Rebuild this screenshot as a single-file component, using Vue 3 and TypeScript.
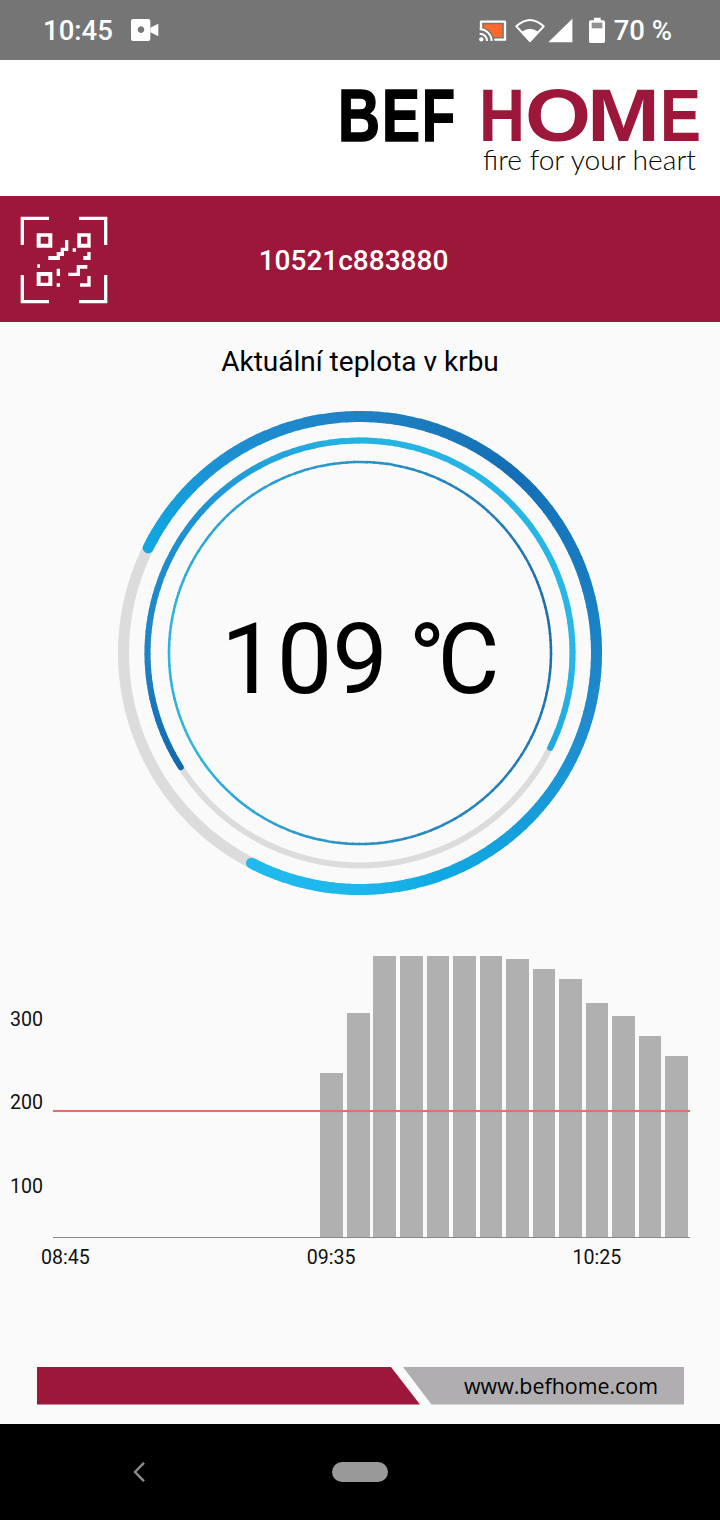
<template>
  <div class="screen">
    <header class="status">
      <div class="status__left">
        <span class="status__text">10:45</span>
        <svg class="status__cam" viewBox="0 0 84 66" width="28" height="22">
          <path fill="#fff" fill-rule="evenodd" d="M6 0H52Q58 0 58 6V60Q58 66 52 66H6Q0 66 0 60V6Q0 0 6 0ZM30 22a10 10 0 1 0 .01 0Z" />
          <path fill="#fff" d="M58 26L82 14V52L58 40Z" />
        </svg>
      </div>
      <div class="status__right">
        <svg viewBox="60 50 380 80" width="126.7" height="26.7">
          <path d="M66 84V64H138V118H106" fill="none" stroke="#fff" stroke-width="7" stroke-linejoin="round" />
          <path d="M75 72H130V110H102Q98 88 75 82Z" fill="#ff6a2c" />
          <circle cx="67" cy="117" r="6.5" fill="#fff" />
          <path d="M62 100A22 22 0 0 1 84 122M62 86A37 37 0 0 1 98 122" fill="none" stroke="#fff" stroke-width="6" />
          <path d="M213 122L172 78Q213 40 254 78Z" fill="none" stroke="#fff" stroke-width="6" stroke-linejoin="round" />
          <path d="M213 126L186 96Q213 74 240 96Z" fill="#fff" />
          <path d="M268 126L340 55V126Z" fill="#fff" />
          <path d="M405 52H425V60H432Q438 60 438 66V122Q438 128 432 128H396Q390 128 390 122V66Q390 60 396 60H405Z" fill="#fff" />
          <rect x="398" y="67" width="32" height="17" fill="#8f8f8f" />
        </svg>
        <span class="status__text">70 %</span>
      </div>
    </header>

    <div class="brand">
      <svg class="brand__logo" viewBox="330 60 380 136" width="380" height="136">
        <text
          v-for="l in logoLetters"
          :key="l.x"
          :transform="`translate(${l.x} 141) scale(${l.w / (l.adv * 74)} 1)`"
          :class="['brand__letter', l.red ? 'brand__letter--red' : 'brand__letter--black']"
        >{{ l.ch }}</text>
        <text x="483" y="169.5" textLength="213" lengthAdjust="spacingAndGlyphs" class="brand__slogan">fire for your heart</text>
      </svg>
    </div>

    <div class="device">
      <svg class="device__qr" viewBox="0 0 390 378" width="130" height="126" fill="#fff">
        <path d="M62 62H147V72H72V147H62ZM237 62H322V147H312V72H237ZM62 237H72V312H147V322H62ZM312 237H322V322H237V312H312Z" />
        <path fill-rule="evenodd" d="M110 112H157V155H110ZM122 122V143H145V122ZM232 112H272V155H232ZM243 122V143H262V122ZM110 228H157V270H110ZM122 240V260H145V240Z" />
        <path d="M145 180H170V168H182V155H195V132H205V165H192V180H180V192H145ZM218 157H228V167H218ZM262 168H272V192H250V180H262ZM112 205H120V215H112ZM170 218H180V240H170ZM170 262H180V272H170ZM230 207H262V218H240V240H205V230H230ZM262 240H272V272H240V262H262Z" />
      </svg>
      <div class="device__id">10521c883880</div>
    </div>

    <main class="main">
      <h1 class="title">Aktuální teplota v krbu</h1>

      <svg class="gauge" viewBox="0 0 500 500" width="500" height="500">
        <circle cx="250" cy="250" r="236.5" class="gauge__track" stroke-width="11" />
        <circle cx="250" cy="250" r="212.5" class="gauge__track" stroke-width="6" />
        <g v-for="ring in rings" :key="ring.r">
          <path
            v-for="(s, i) in ring.segments"
            :key="i"
            :d="s.d"
            :stroke="s.color"
            :stroke-width="ring.width"
            :stroke-linecap="ring.caps && (i === 0 || i === ring.segments.length - 1) ? 'round' : 'butt'"
            fill="none"
          />
        </g>
        <text x="111" y="290" class="gauge__value">109 <tspan dx="-4">°</tspan><tspan dx="-8" textLength="62" lengthAdjust="spacingAndGlyphs">C</tspan></text>
      </svg>

      <section class="chart">
        <div class="chart__body">
          <div class="chart__axis">
            <span v-for="v in yLabels" :key="v" class="chart__y">{{ v }}</span>
          </div>
          <div class="chart__plot">
            <div
              v-for="(h, i) in bars"
              :key="i"
              class="chart__bar"
              :style="{ height: h + 'px' }"
            />
            <div class="chart__limit" />
          </div>
        </div>
        <div class="chart__times">
          <span v-for="t in times" :key="t" class="chart__time">{{ t }}</span>
        </div>
      </section>

      <footer class="banner">
        <div class="banner__red" />
        <div class="banner__grey">www.befhome.com</div>
      </footer>
    </main>

    <nav class="nav">
      <svg class="nav__back" viewBox="0 0 12 20" width="12" height="20">
        <path d="M11 0.8L2 10L11 19.2" fill="none" stroke="#8c8c8c" stroke-width="2.4" />
      </svg>
      <div class="nav__home" />
    </nav>
  </div>
</template>

<script setup lang="ts">
type Stop = [number, string]

// adv = glyph advance of Liberation Sans Bold, used to squeeze each letter to the logo's width
const logoLetters = [
  { ch: 'B', x: 338, w: 42, adv: 0.722, red: false },
  { ch: 'E', x: 382, w: 38, adv: 0.667, red: false },
  { ch: 'F', x: 422, w: 33, adv: 0.611, red: false },
  { ch: 'H', x: 479, w: 46, adv: 0.722, red: true },
  { ch: 'O', x: 525, w: 66, adv: 0.778, red: true },
  { ch: 'M', x: 587, w: 73, adv: 0.833, red: true },
  { ch: 'E', x: 660, w: 41, adv: 0.667, red: true }
]

const yLabels = [300, 200, 100]
const times = ['08:45', '09:35', '10:25']
const bars = [164.3, 224.3, 281.3, 281.3, 281.3, 281.3, 281.3, 278, 267.7, 257.7, 234.3, 221, 201, 181]

function hexToRgb(hex: string) {
  return [1, 3, 5].map((i) => parseInt(hex.slice(i, i + 2), 16))
}

function colorAt(stops: Stop[], deg: number) {
  let a = stops[0]
  let b = stops[stops.length - 1]
  for (let i = 0; i < stops.length - 1; i++) {
    if (deg >= stops[i][0] && deg <= stops[i + 1][0]) {
      a = stops[i]
      b = stops[i + 1]
      break
    }
  }
  const t = b[0] === a[0] ? 0 : (deg - a[0]) / (b[0] - a[0])
  const ca = hexToRgb(a[1])
  const cb = hexToRgb(b[1])
  const mix = ca.map((c, i) => Math.round(c + (cb[i] - c) * t))
  return `rgb(${mix.join(',')})`
}

function point(r: number, deg: number) {
  const rad = (deg * Math.PI) / 180
  return `${(250 + r * Math.sin(rad)).toFixed(2)} ${(250 - r * Math.cos(rad)).toFixed(2)}`
}

// the sweep gradient is cut into short arcs, svg has no conic stroke
function segments(r: number, from: number, to: number, stops: Stop[]) {
  const out: { d: string; color: string }[] = []
  const step = 2
  for (let a = from; a < to; a += step) {
    const end = Math.min(a + step + 0.4, to)
    out.push({
      d: `M${point(r, a)}A${r} ${r} 0 0 1 ${point(r, end)}`,
      color: colorAt(stops, a + step / 2)
    })
  }
  return out
}

const rings = [
  {
    r: 236.5,
    width: 11,
    caps: true,
    segments: segments(236.5, 296.4, 567.3, [
      [296, '#0fa9e3'],
      [325, '#1c90d2'],
      [360, '#1f82c5'],
      [400, '#146fb5'],
      [440, '#1a80c4'],
      [465, '#1f8bce'],
      [500, '#14a0dc'],
      [520, '#10a8e2'],
      [540, '#1db7ec'],
      [568, '#20baee']
    ])
  },
  {
    r: 212.5,
    width: 6,
    caps: true,
    segments: segments(212.5, 237.5, 476.5, [
      [237, '#1268ae'],
      [270, '#1f84c6'],
      [315, '#1f96d4'],
      [360, '#25b3e4'],
      [450, '#27b8e8'],
      [477, '#22a8de']
    ])
  },
  {
    r: 191,
    width: 2.5,
    caps: false,
    segments: segments(191, 0, 360, [
      [0, '#2a92c8'],
      [80, '#1f6ca8'],
      [180, '#2a90c6'],
      [240, '#30b4de'],
      [280, '#2fb2de'],
      [360, '#2a92c8']
    ])
  }
]
</script>

<style scoped>
.screen {
  width: 720px;
  height: 1520px;
  display: flex;
  flex-direction: column;
  background: #fafafa;
  font-family: Roboto, sans-serif;
  overflow: hidden;
}

.status {
  height: 60px;
  flex: none;
  box-sizing: border-box;
  background: #757575;
  display: flex;
  align-items: center;
  justify-content: space-between;
  padding: 0 48px 0 43px;
  color: #fff;
}

.status__left,
.status__right {
  display: flex;
  align-items: center;
}

.status__left {
  gap: 18px;
}

.status__right {
  gap: 8px;
}

.status__text {
  font-size: 27.5px;
  font-weight: 500;
  line-height: 62px;
  height: 60px;
}

.status__cam {
  display: block;
}

.brand {
  height: 136px;
  flex: none;
  background: #fff;
  display: flex;
  justify-content: flex-end;
  padding-right: 10px;
}

.brand__letter {
  font-family: "Liberation Sans", sans-serif;
  font-weight: 700;
  font-size: 74px;
}

.brand__letter--black {
  fill: #000;
  stroke: #000;
  stroke-width: 1.6px;
}

.brand__letter--red {
  fill: #9c1739;
}

.brand__slogan {
  font-family: Lato, sans-serif;
  font-weight: 300;
  font-size: 27px;
  fill: #000;
}

.device {
  height: 126px;
  flex: none;
  background: #9c1739;
  display: flex;
  align-items: center;
}

.device__qr {
  flex: none;
}

.device__id {
  width: 447px;
  padding-top: 2px;
  text-align: center;
  color: #fff;
  font-size: 28px;
  font-weight: 500;
}

.main {
  flex: 1;
  display: flex;
  flex-direction: column;
  align-items: center;
}

.title {
  margin: 24px 0 25px;
  font-size: 28px;
  line-height: 32px;
  font-weight: 400;
  color: #000;
}

.gauge {
  display: block;
  flex: none;
}

.gauge__track {
  fill: none;
  stroke: #dcdcdc;
}

.gauge__value {
  font-family: Roboto, sans-serif;
  font-size: 99px;
  fill: #000;
}

.chart {
  width: 100%;
  margin-top: 52.7px;
}

.chart__body {
  display: flex;
}

.chart__axis {
  width: 53px;
  flex: none;
  display: flex;
  flex-direction: column;
  padding: 22.2px 0 0 10px;
  box-sizing: border-box;
}

.chart__y {
  font-size: 19.6px;
  line-height: 83.5px;
  color: #111;
}

.chart__plot {
  position: relative;
  flex: none;
  width: 635px;
  height: 281.3px;
  border-bottom: 1px solid #888;
  display: flex;
  align-items: flex-end;
  justify-content: flex-end;
  gap: 3.85px;
  padding-right: 2px;
}

.chart__bar {
  width: 22.7px;
  flex: none;
  background: #b0b0b0;
}

.chart__limit {
  position: absolute;
  left: 0;
  right: 0;
  top: 154.3px;
  height: 2px;
  background: #e46f6f;
  box-shadow: 0 0 1px rgba(228, 111, 111, 0.6);
}

.chart__times {
  display: flex;
  padding: 7px 0 0 41px;
}

.chart__time {
  width: 265.8px;
  flex: none;
  font-size: 19.6px;
  line-height: 26px;
  color: #111;
}

.banner {
  margin-top: auto;
  margin-bottom: 19.5px;
  margin-left: 1px;
  width: 647px;
  height: 37.5px;
  display: flex;
}

.banner__red {
  width: 383px;
  flex: none;
  background: #9c1739;
  clip-path: polygon(0 0, 354px 0, 100% 100%, 0 100%);
}

.banner__grey {
  width: 281px;
  flex: none;
  margin-left: -17px;
  box-sizing: border-box;
  padding-right: 26px;
  background: #b0aeb0;
  clip-path: polygon(0 0, 100% 0, 100% 100%, 28.5px 100%);
  text-align: right;
  color: #000;
  font-family: "Open Sans", sans-serif;
  font-size: 21.4px;
  font-weight: 500;
  line-height: 37.5px;
  white-space: nowrap;
}

.nav {
  height: 96px;
  flex: none;
  background: #000;
  position: relative;
  display: flex;
  align-items: center;
  justify-content: center;
}

.nav__back {
  position: absolute;
  left: 133px;
  top: 38px;
}

.nav__home {
  width: 56px;
  height: 20px;
  border-radius: 10px;
  background: #999;
}
</style>

<style>
html,
body {
  margin: 0;
  background: #fafafa;
}
</style>
